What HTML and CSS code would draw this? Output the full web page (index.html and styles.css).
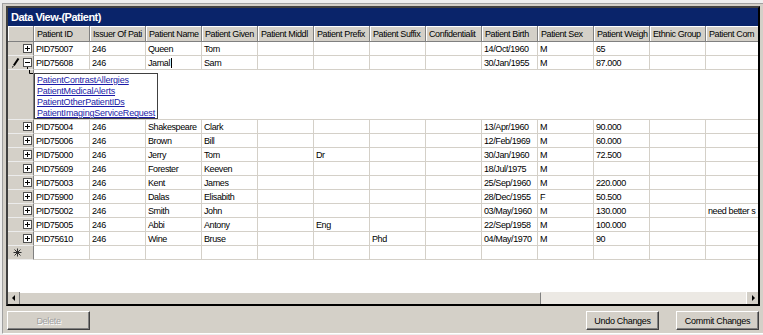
FILE: index.html
```html
<!DOCTYPE html>
<html lang="en">
  <head>
    <meta charset="UTF-8" />
    <title>Data View-(Patient)</title>
    <link rel="stylesheet" href="styles.css">
  </head>
  <body>
    <div class="panel">
      <div class="grid">
        <div class="caption">Data View-(Patient)</div>
        <div class="viewport">
          <table class="data">
            <colgroup>
              <col class="col-rh">
              <col><col><col><col><col><col><col><col><col><col><col><col><col>
            </colgroup>
            <thead>
              <tr>
                <th class="corner"></th>
                <th>Patient ID</th>
                <th>Issuer Of Pati</th>
                <th>Patient Name</th>
                <th>Patient Given</th>
                <th>Patient Middl</th>
                <th>Patient Prefix</th>
                <th>Patient Suffix</th>
                <th>Confidentialit</th>
                <th>Patient Birth</th>
                <th>Patient Sex</th>
                <th>Patient Weigh</th>
                <th>Ethnic Group</th>
                <th>Patient Com</th>
              </tr>
            </thead>
            <tbody>
              <tr>
                <td class="rh"><div class="rh-box"><svg class="tog" width="9" height="9" viewBox="0 0 9 9"><rect x="0.5" y="0.5" width="8" height="8" fill="#fff" stroke="#505050"/><path d="M2 4.5H7M4.5 2V7" stroke="#000"/></svg></div></td>
                <td>PID75007</td><td>246</td><td>Queen</td><td>Tom</td><td></td><td></td><td></td><td></td><td>14/Oct/1960</td><td>M</td><td>65</td><td></td><td></td>
              </tr>
              <tr>
                <td class="rh"><div class="rh-box">
                  <svg class="pencil" width="8" height="10" viewBox="0 0 8 10"><path d="M6.5 0.5L1.8 7.5" stroke="#000" stroke-width="2"/><path d="M1.2 8L0.5 9.5" stroke="#000"/></svg>
                  <svg class="tog" width="9" height="14" viewBox="0 0 9 14"><rect x="0.5" y="2.5" width="8" height="8" fill="#fff" stroke="#505050"/><path d="M2 6.5H7" stroke="#000"/><path d="M4.5 11V14" stroke="#000"/></svg>
                </div></td>
                <td>PID75608</td><td>246</td><td>Jamal<span class="caret"></span></td><td>Sam</td><td></td><td></td><td></td><td></td><td>30/Jan/1955</td><td>M</td><td>87.000</td><td></td><td></td>
              </tr>
              <tr class="child-row">
                <td class="rh child-head"><svg class="tree" width="26" height="6" viewBox="0 0 26 6"><path d="M21.5 0V3.5H26" stroke="#000" fill="none"/></svg></td>
                <td class="child" colspan="13">
                  <div class="relations">
                    <a href="#">PatientContrastAllergies</a>
                    <a href="#">PatientMedicalAlerts</a>
                    <a href="#">PatientOtherPatientIDs</a>
                    <a href="#">PatientImagingServiceRequest</a>
                  </div>
                </td>
              </tr>
            </tbody>
            <tbody id="rows"></tbody>
            <tbody>
              <tr>
                <td class="rh"><svg class="star" width="9" height="9" viewBox="0 0 9 9"><path d="M4.5 0.5V8.5M0.5 4.5H8.5M1.5 1.5L7.5 7.5M7.5 1.5L1.5 7.5" stroke="#303030"/></svg></td>
                <td></td><td></td><td></td><td></td><td></td><td></td><td></td><td></td><td></td><td></td><td></td><td></td><td></td>
              </tr>
            </tbody>
          </table>
        </div>
        <div class="hscroll">
          <div class="sb-btn"><svg width="12" height="12" viewBox="0 0 12 12"><path d="M4 6L7 3V9Z" fill="#000"/></svg></div>
          <div class="sb-thumb"></div>
          <div class="sb-track"></div>
          <div class="sb-btn"><svg width="12" height="12" viewBox="0 0 12 12"><path d="M8 6L5 3V9Z" fill="#000"/></svg></div>
        </div>
      </div>

      <div class="actions">
        <button class="btn btn-delete" disabled>Delete</button>
        <button class="btn btn-undo">Undo Changes</button>
        <button class="btn btn-commit">Commit Changes</button>
      </div>
    </div>

    <script>
      const patients = [
        ['PID75004', '246', 'Shakespeare', 'Clark', '', '', '', '', '13/Apr/1960', 'M', '90.000', '', ''],
        ['PID75006', '246', 'Brown', 'Bill', '', '', '', '', '12/Feb/1969', 'M', '60.000', '', ''],
        ['PID75000', '246', 'Jerry', 'Tom', '', 'Dr', '', '', '30/Jan/1960', 'M', '72.500', '', ''],
        ['PID75609', '246', 'Forester', 'Keeven', '', '', '', '', '18/Jul/1975', 'M', '', '', ''],
        ['PID75003', '246', 'Kent', 'James', '', '', '', '', '25/Sep/1960', 'M', '220.000', '', ''],
        ['PID75900', '246', 'Dalas', 'Elisabith', '', '', '', '', '28/Dec/1955', 'F', '50.500', '', ''],
        ['PID75002', '246', 'Smith', 'John', '', '', '', '', '03/May/1960', 'M', '130.000', '', 'need better s'],
        ['PID75005', '246', 'Abbi', 'Antony', '', 'Eng', '', '', '22/Sep/1958', 'M', '100.000', '', ''],
        ['PID75610', '246', 'Wine', 'Bruse', '', '', 'Phd', '', '04/May/1970', 'M', '90', '', '']
      ];

      const plusIcon = '<div class="rh-box"><svg class="tog" width="9" height="9" viewBox="0 0 9 9"><rect x="0.5" y="0.5" width="8" height="8" fill="#fff" stroke="#505050"/><path d="M2 4.5H7M4.5 2V7" stroke="#000"/></svg></div>';

      function renderRows() {
        const body = document.getElementById('rows');
        patients.forEach(p => {
          const tr = document.createElement('tr');
          const head = document.createElement('td');
          head.className = 'rh';
          head.innerHTML = plusIcon;
          tr.appendChild(head);
          p.forEach(value => {
            const td = document.createElement('td');
            td.textContent = value;
            tr.appendChild(td);
          });
          body.appendChild(tr);
        });
      }

      renderRows();
    </script>
  </body>
</html>
```

FILE: styles.css
```css
html {
  background: #eeeeee;
}

body {
  margin: 0;
  font-family: "Liberation Sans", Arial, sans-serif;
  font-size: 9px;
  letter-spacing: -0.4px;
  color: #000;
}

.panel {
  margin: 3px 0 0 2px;
  padding: 2px 3px 3px 3px;
  background: #d4d0c8;
  border-top: 1px solid #a0a0a0;
  border-left: 1px solid #a0a0a0;
  border-bottom: 1px solid #ffffff;
}

.grid {
  width: 754px;
  height: 300px;
  box-sizing: border-box;
  border: 2px solid;
  border-color: #404040 #000 #000 #404040;
  background: #fff;
  display: flex;
  flex-direction: column;
}

.caption {
  height: 18px;
  line-height: 18px;
  padding-left: 3px;
  background: #0a246a;
  color: #fff;
  font-weight: bold;
  font-size: 11px;
  letter-spacing: -0.5px;
}

.viewport {
  flex: 1;
  overflow: hidden;
  background: #fff;
}

/* grid table */
.data {
  table-layout: fixed;
  width: 754px;
  border-collapse: separate;
  border-spacing: 0;
}

.data col {
  width: 56px;
}

.data col.col-rh {
  width: 26px;
}

.data th {
  height: 15px;
  padding: 0 0 0 3px;
  background: #d4d0c8;
  font-weight: normal;
  text-align: left;
  white-space: nowrap;
  overflow: hidden;
  border-right: 1px solid #808080;
  border-bottom: 1px solid #808080;
  box-shadow: inset 1px 1px #fff;
}

.data tr {
  height: 14px;
}

.data td {
  padding: 0 0 0 2px;
  line-height: 12px;
  white-space: nowrap;
  overflow: hidden;
  border-right: 1px solid #d4d0c8;
  border-bottom: 1px solid #d4d0c8;
}

.data td.rh {
  padding: 0;
  background: #d4d0c8;
  border-right: 1px solid #808080;
  border-bottom: 1px solid #ececec;
}

.rh-box {
  display: flex;
  align-items: center;
  height: 13px;
  padding: 0 1px 0 4px;
}

.rh-box .tog {
  margin-left: auto;
  display: block;
}

.pencil {
  display: block;
}

.caret {
  display: inline-block;
  width: 1px;
  height: 10px;
  margin-left: 1px;
  background: #000;
  vertical-align: -2px;
}

.star {
  display: block;
  margin-left: 5px;
}

/* expanded relations */
.child-row {
  height: 50px;
}

.data td.child-head {
  vertical-align: top;
}

.tree {
  display: block;
}

.data td.child {
  padding: 3px 0 0 0;
  vertical-align: top;
}

.relations {
  width: 124px;
  height: 46px;
  box-sizing: border-box;
  padding: 1px 0 0 2px;
  border: 1px solid #404040;
}

.relations a {
  display: block;
  line-height: 11px;
  letter-spacing: -0.2px;
  color: #1a1aa8;
  text-decoration: underline;
}

/* scroll bar */
.hscroll {
  display: flex;
  height: 12px;
  background: #ece9e4;
}

.sb-btn {
  width: 12px;
  background: #d4d0c8;
  box-sizing: border-box;
  border-right: 1px solid #808080;
}

.sb-btn svg {
  display: block;
}

.sb-thumb {
  width: 521px;
  background: #d4d0c8;
  box-sizing: border-box;
  border-top: 1px solid #fff;
  border-right: 1px solid #808080;
}

.sb-track {
  flex: 1;
}

.hscroll .sb-btn:last-child {
  border-right: none;
  border-left: 1px solid #fff;
}

/* buttons */
.actions {
  display: flex;
  width: 754px;
  margin-top: 5px;
  padding: 0 1px;
  box-sizing: border-box;
}

.btn {
  height: 19px;
  padding: 0;
  background: #d4d0c8;
  border: 1px solid;
  border-color: #fff #404040 #404040 #fff;
  box-shadow: inset -1px -1px #808080;
  font-family: inherit;
  font-size: 9px;
  letter-spacing: -0.3px;
  white-space: nowrap;
  color: #000;
}

.btn-delete {
  width: 83px;
  color: #a0a0a0;
  text-shadow: 1px 1px #fff;
}

.btn-undo {
  width: 73px;
  margin-left: auto;
}

.btn-commit {
  width: 83px;
  margin-left: 17px;
}
```
